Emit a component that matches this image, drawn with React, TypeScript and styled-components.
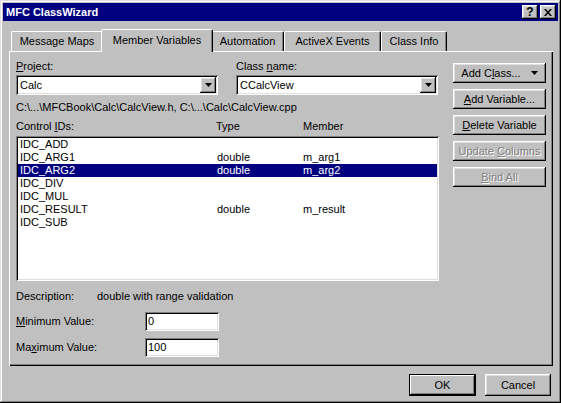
import styled, { createGlobalStyle } from "styled-components";

const GlobalStyle = createGlobalStyle`
  html, body {
    margin: 0;
    padding: 0;
    background: #c0c0c0;
  }
  body {
    font-family: "Liberation Sans", Arial, sans-serif;
    font-size: 11px;
    color: #000;
  }
`;

// Win95 bevels
const raised = `
  box-shadow: inset -1px -1px #000, inset 1px 1px #fff, inset -2px -2px #808080,
    inset 2px 2px #dfdfdf;
`;
const sunken = `
  box-shadow: inset 1px 1px #808080, inset -1px -1px #fff, inset 2px 2px #000,
    inset -2px -2px #dfdfdf;
`;

const Window = styled.div`
  width: 561px;
  height: 403px;
  box-sizing: border-box;
  padding: 3px;
  background: #c0c0c0;
  box-shadow: inset -1px -1px #000, inset 1px 1px #dfdfdf, inset -2px -2px #808080,
    inset 2px 2px #fff;
  display: flex;
  flex-direction: column;
`;

const TitleBar = styled.div`
  height: 18px;
  background: #000080;
  color: #fff;
  font-weight: bold;
  font-size: 11px;
  display: flex;
  align-items: center;
  justify-content: space-between;
  padding: 0 2px 0 3px;
`;

const TitleButtons = styled.div`
  display: flex;
  gap: 2px;
`;

const TitleButton = styled.div`
  width: 16px;
  height: 14px;
  background: #c0c0c0;
  ${raised}
  color: #000;
  display: flex;
  align-items: center;
  justify-content: center;
  font-weight: bold;
  font-size: 12px;
  line-height: 14px;
`;

const Body = styled.div`
  flex: 1;
  display: flex;
  flex-direction: column;
  padding: 8px 5px 0 6px;
`;

const TabStrip = styled.div`
  height: 22px;
  display: flex;
  align-items: flex-end;
  padding-left: 2px;
`;

const Tab = styled.div<{ $w: number; $active?: boolean }>`
  box-sizing: border-box;
  width: ${({ $w, $active }) => ($active ? $w + 4 : $w)}px;
  height: ${({ $active }) => ($active ? 23 : 20)}px;
  margin: ${({ $active }) => ($active ? "0 -2px -1px" : "0")};
  position: relative;
  z-index: ${({ $active }) => ($active ? 2 : 0)};
  background: #c0c0c0;
  border-top: 1px solid #fff;
  border-left: 1px solid #fff;
  border-right: 1px solid #000;
  border-radius: 2px 2px 0 0;
  box-shadow: inset -1px 0 #808080;
  display: flex;
  align-items: center;
  justify-content: center;
  padding-bottom: ${({ $active }) => ($active ? 3 : 1)}px;
  white-space: nowrap;
`;

const Panel = styled.div`
  height: 315px;
  box-sizing: border-box;
  position: relative;
  z-index: 1;
  ${`box-shadow: inset 1px 1px #fff, inset -1px -1px #000, inset -2px -2px #808080;`}
  padding: 9px 7px 0 7px;
  display: grid;
  grid-template-columns: 423px 93px;
  column-gap: 14px;
  align-items: start;
`;

const LeftCol = styled.div`
  display: flex;
  flex-direction: column;
`;

const FieldRow = styled.div`
  display: flex;
  gap: 18px;
`;

const Field = styled.div<{ $w: number }>`
  width: ${({ $w }) => $w}px;
  display: flex;
  flex-direction: column;
  gap: 2px;
`;

const Label = styled.div`
  line-height: 13px;
  white-space: nowrap;
`;

const Combo = styled.div`
  height: 20px;
  box-sizing: border-box;
  background: #fff;
  ${sunken}
  padding: 2px;
  display: flex;
  align-items: center;
`;

const ComboText = styled.div`
  flex: 1;
  padding-left: 2px;
  line-height: 16px;
`;

const DropButton = styled.div`
  width: 16px;
  height: 16px;
  box-sizing: border-box;
  background: #c0c0c0;
  ${raised}
  display: flex;
  align-items: center;
  justify-content: center;
`;

const PathText = styled.div`
  margin-top: 6px;
  line-height: 13px;
  white-space: nowrap;
`;

const ListHeader = styled.div`
  margin-top: 6px;
  display: grid;
  grid-template-columns: 200px 87px 1fr;
  line-height: 13px;
`;

const ListBox = styled.div`
  margin-top: 3px;
  height: 145px;
  box-sizing: border-box;
  background: #fff;
  ${sunken}
  padding: 2px;
`;

const ListRow = styled.div<{ $selected?: boolean }>`
  display: grid;
  grid-template-columns: 197px 86px 1fr;
  height: 13px;
  line-height: 13px;
  padding-left: 2px;
  background: ${({ $selected }) => ($selected ? "#000080" : "transparent")};
  color: ${({ $selected }) => ($selected ? "#fff" : "#000")};
`;

const DescRow = styled.div`
  margin-top: 9px;
  display: grid;
  grid-template-columns: 81px 1fr;
  line-height: 13px;
`;

const ValueRows = styled.div`
  margin-top: 9px;
  display: flex;
  flex-direction: column;
  gap: 7px;
`;

const ValueRow = styled.div`
  display: grid;
  grid-template-columns: 129px 74px;
  align-items: center;
`;

const Edit = styled.div`
  height: 19px;
  box-sizing: border-box;
  background: #fff;
  ${sunken}
  padding: 0 3px;
  line-height: 19px;
`;

const RightCol = styled.div`
  margin-top: 3px;
  display: flex;
  flex-direction: column;
  gap: 6px;
`;

const Button = styled.div<{ $disabled?: boolean; $w?: number; $h?: number }>`
  width: ${({ $w }) => ($w ? `${$w}px` : "auto")};
  height: ${({ $h }) => $h || 20}px;
  box-sizing: border-box;
  background: #c0c0c0;
  ${raised}
  display: flex;
  align-items: center;
  justify-content: center;
  gap: 10px;
  white-space: nowrap;
  color: ${({ $disabled }) => ($disabled ? "#808080" : "#000")};
  text-shadow: ${({ $disabled }) => ($disabled ? "1px 1px #fff" : "none")};
`;

const DefaultButton = styled(Button)`
  box-shadow: inset 0 0 0 1px #000, inset -2px -2px #000, inset 2px 2px #fff,
    inset -3px -3px #808080;
`;

const Footer = styled.div`
  display: flex;
  justify-content: flex-end;
  gap: 9px;
  padding: 8px 2px 0 0;
`;

const U = styled.span`
  text-decoration: underline;
  text-underline-offset: 1px;
`;

const DownArrow = () => (
  <svg width="7" height="4" viewBox="0 0 7 4">
    <path d="M0 0h7L3.5 4z" fill="#000" />
  </svg>
);

const rows = [
  { id: "IDC_ADD", type: "", member: "" },
  { id: "IDC_ARG1", type: "double", member: "m_arg1" },
  { id: "IDC_ARG2", type: "double", member: "m_arg2", selected: true },
  { id: "IDC_DIV", type: "", member: "" },
  { id: "IDC_MUL", type: "", member: "" },
  { id: "IDC_RESULT", type: "double", member: "m_result" },
  { id: "IDC_SUB", type: "", member: "" },
];

const tabs = [
  { title: "Message Maps", w: 92 },
  { title: "Member Variables", w: 108, active: true },
  { title: "Automation", w: 73 },
  { title: "ActiveX Events", w: 97 },
  { title: "Class Info", w: 66 },
];

const App = () => {
  return (
    <>
      <GlobalStyle />
      <Window>
        <TitleBar>
          <span>MFC ClassWizard</span>
          <TitleButtons>
            <TitleButton>?</TitleButton>
            <TitleButton>
              <svg width="8" height="7" viewBox="0 0 8 7">
                <path d="M0 0h2l2 2.5L6 0h2L5 3.5 8 7H6L4 4.5 2 7H0l3-3.5z" fill="#000" />
              </svg>
            </TitleButton>
          </TitleButtons>
        </TitleBar>
        <Body>
          <TabStrip>
            {tabs.map((t) => (
              <Tab key={t.title} $w={t.w} $active={t.active}>
                {t.title}
              </Tab>
            ))}
          </TabStrip>
          <Panel>
            <LeftCol>
              <FieldRow>
                <Field $w={202}>
                  <Label>
                    <U>P</U>roject:
                  </Label>
                  <Combo>
                    <ComboText>Calc</ComboText>
                    <DropButton>
                      <DownArrow />
                    </DropButton>
                  </Combo>
                </Field>
                <Field $w={202}>
                  <Label>
                    Class <U>n</U>ame:
                  </Label>
                  <Combo>
                    <ComboText>CCalcView</ComboText>
                    <DropButton>
                      <DownArrow />
                    </DropButton>
                  </Combo>
                </Field>
              </FieldRow>
              <PathText>C:\...\MFCBook\Calc\CalcView.h, C:\...\Calc\CalcView.cpp</PathText>
              <ListHeader>
                <span>
                  Control <U>I</U>Ds:
                </span>
                <span>Type</span>
                <span>Member</span>
              </ListHeader>
              <ListBox>
                {rows.map((r) => (
                  <ListRow key={r.id} $selected={r.selected}>
                    <span>{r.id}</span>
                    <span>{r.type}</span>
                    <span>{r.member}</span>
                  </ListRow>
                ))}
              </ListBox>
              <DescRow>
                <span>Description:</span>
                <span>double with range validation</span>
              </DescRow>
              <ValueRows>
                <ValueRow>
                  <Label>
                    <U>M</U>inimum Value:
                  </Label>
                  <Edit>0</Edit>
                </ValueRow>
                <ValueRow>
                  <Label>
                    Ma<U>x</U>imum Value:
                  </Label>
                  <Edit>100</Edit>
                </ValueRow>
              </ValueRows>
            </LeftCol>
            <RightCol>
              <Button>
                <span>
                  Add C<U>l</U>ass...
                </span>
                <DownArrow />
              </Button>
              <Button>
                <span>
                  <U>A</U>dd Variable...
                </span>
              </Button>
              <Button>
                <span>
                  <U>D</U>elete Variable
                </span>
              </Button>
              <Button $disabled>
                <span>
                  Update <U>C</U>olumns
                </span>
              </Button>
              <Button $disabled>
                <span>
                  <U>B</U>ind All
                </span>
              </Button>
            </RightCol>
          </Panel>
          <Footer>
            <DefaultButton $w={67} $h={22}>
              OK
            </DefaultButton>
            <Button $w={66} $h={22}>
              Cancel
            </Button>
          </Footer>
        </Body>
      </Window>
    </>
  );
};

export default App;
